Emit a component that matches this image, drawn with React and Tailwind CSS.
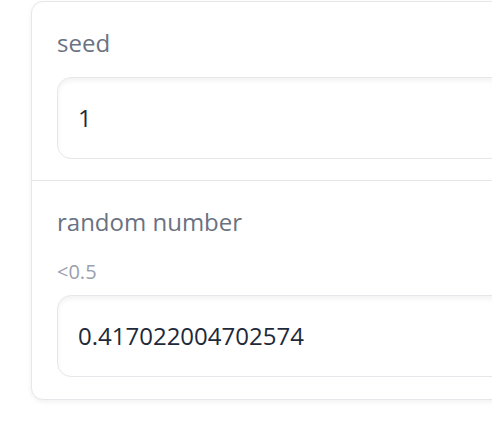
import React from 'react';

const Field = ({ label, info, value }) => {
    return (
        <div className={`px-[25px] pt-[23px] ${info ? 'pb-[22px]' : 'pb-[21px]'}`}>
            <div className="text-[24px] leading-[36px] text-gray-500">{label}</div>
            {info && (
                <div className="mt-[19px] text-[20px] leading-[26px] text-gray-400">{info}</div>
            )}
            <div
                className={`${info ? 'mt-[10px]' : 'mt-[16px]'} h-[82px] rounded-[14px] border border-gray-200 bg-white px-[20px] flex items-center shadow-[inset_0_3px_5px_rgba(0,0,0,0.05)]`}
            >
                <span className="text-[24px] text-gray-800">{value}</span>
            </div>
        </div>
    );
};

export default function App() {
    return (
        <div
            className="w-[492px] h-[436px] overflow-hidden bg-white"
            style={{ fontFamily: '"Open Sans", "Noto Sans", sans-serif' }}
        >
            <div className="pl-[31px] pt-[1px]">
                <div className="w-[560px] rounded-[12px] border border-gray-200 bg-white shadow-[0_2px_5px_rgba(0,0,0,0.06)] divide-y divide-gray-200">
                    <Field label="seed" value="1" />
                    <Field label="random number" info="<0.5" value="0.417022004702574" />
                </div>
            </div>
        </div>
    );
}
